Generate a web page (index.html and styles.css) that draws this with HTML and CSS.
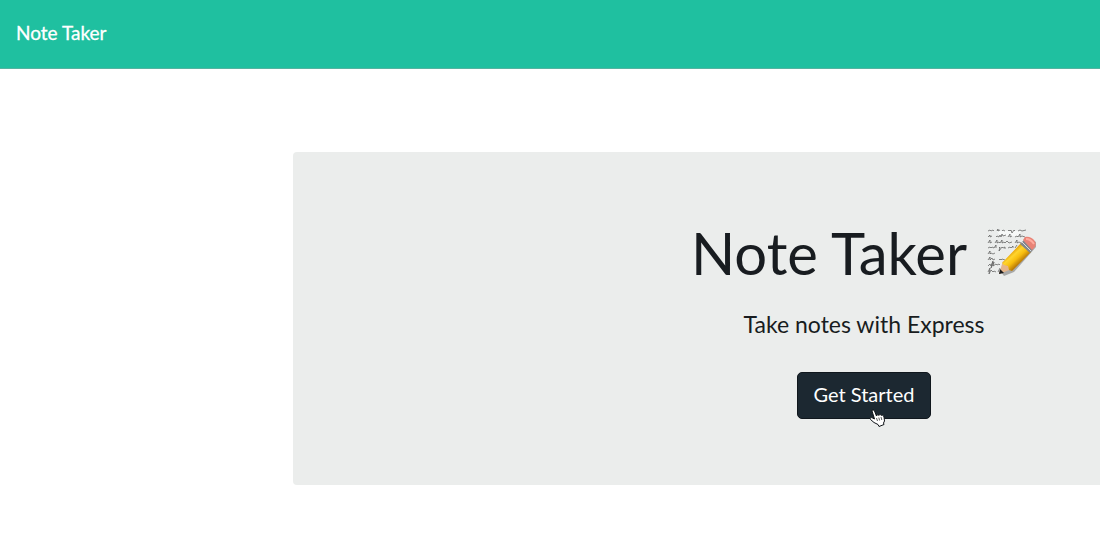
FILE: index.html
```html
<!DOCTYPE html>
<html lang="en">
<head>
<meta charset="utf-8">
<title>Note Taker</title>
<link rel="stylesheet" href="styles.css">
</head>
<body>
<nav class="navbar"><a class="brand" href="#">Note Taker</a></nav>
<main class="container">
  <section class="jumbotron">
    <h1 class="title">Note Taker
      <svg class="memo" viewBox="0 0 50 50" role="img" aria-label="memo">
        <defs>
          <linearGradient id="body" gradientUnits="userSpaceOnUse" x1="25" y1="24" x2="34" y2="34">
            <stop offset="0" stop-color="#e9a70c"/><stop offset="0.25" stop-color="#ffd52e"/><stop offset="0.6" stop-color="#f7bd0d"/><stop offset="1" stop-color="#b97a08"/>
          </linearGradient>
        </defs>
        <path d="M10 3h24l-3 5H13z" fill="#f7f9f8"/>
        <g class="script">
          <path d="M1 3l2-1 1 1 2-1 1 1M10 3l1-2v2l2-1M15 3l1-1 2 1M21 3l1-1 1 1 1-1 1 3 2-3 1 1M31 3l2-1 2 1 4-1"/>
          <path d="M1 9l2-2v2l2-1M9 9l1-1 2 1 1-2 1 2 1-3 1 2 3-1M21 9l2-3v3l2-1M28 9l2-1 1 1 2-3v3l2-1 3 1"/>
          <path d="M1 15l2-3v3l2-1M8 15l2-3v3l2-1 1 1 2-3v3l2-1 1 1 2-2 2 2 3-1M28 15l2-3v3l2-1 2 1"/>
          <path d="M1 20l2-1 1 1 1-1 2 1 2-3v3M12 20l1-1-1 4 3-4 1 1 2-1v2M21 20l2-1 1 1 2-2v2M28 20l2-3"/>
          <path d="M1 26l2-3v3l1-1 2 1 2-1"/>
          <path d="M1 32l2-3v3l2-2 1 2 2-1M12 32l1-1 1 1 1-1 3 1M20 31l2 1"/>
          <path d="M1 38l2-2 1 2 2-5-2 7 3-6-1 4 3-2 1 1 2-1 1 1"/>
          <path d="M1 44l2-4-1 6 2-4 2 2 1-1 2 1M11 44l2-4"/>
        </g>
        <path d="M17 48l10-4 22-25 0-5-5-3-30 33z" fill="#444" opacity=".4"/>
        <path d="M12 46l4-13 9 8z" fill="#e6b58a"/>
        <path d="M12 46l1-5 4 4z" fill="#1c1c1c"/>
        <path d="M15 35l19-20 10 9-19 19-3-1-1-4-4-1z" fill="url(#body)"/>
        <path d="M33 16l4-4 9 9-3 4z" fill="#83878b"/>
        <path d="M35 14l9 9" stroke="#d9dcde" stroke-width="1"/>
        <path d="M36 12l2-3c4-1 7 1 9 3 2 2 2 5 1 7l-3 3z" fill="#e98376"/>
        <path d="M39 11c4 0 6 2 8 5" fill="none" stroke="#ffaa9d" stroke-width="2"/>
      </svg>
    </h1>
    <p class="lead">Take notes with Express</p>
    <div class="action">
      <button class="btn" type="button">Get Started</button>
      <svg class="pointer" viewBox="0 0 16 18" aria-hidden="true">
        <path d="M3 2c0-1.500 2-1.500 2.500 0L7.500 7c0-1.500 2-1.500 2.500-.5 0-1.500 2-1 2.500 0 1-1 2 0 2.500 1.500l.5 4-1 2 .5 1.500-5 2-1-2-4-2-3.500-3c-1-1.500.5-2.500 2-1.500l2 1z" fill="#fff" stroke="#101418"/>
        <path d="M7.500 9l1 3M9.800 8.500l.8 3M12 8l.8 3" stroke="#333" stroke-width=".8" fill="none"/>
      </svg>
    </div>
  </section>
</main>
</body>
</html>
```
FILE: styles.css
```css
* { box-sizing: border-box; }
body {
  margin: 0;
  overflow-x: hidden;
  background: #fff;
  color: #181c20;
  font-family: Lato, sans-serif;
}
.navbar {
  display: flex;
  align-items: center;
  padding: 19px 16px 21px;
  background: #1fc0a0;
  border-bottom: 1px solid #55b3a0;
}
.brand {
  color: #fff;
  font-size: 19px;
  line-height: 28px;
  text-decoration: none;
  -webkit-text-stroke: 0.3px #fff;
}
.container {
  margin: 83px -335px 64px 293px;
}
.jumbotron {
  display: flex;
  flex-direction: column;
  align-items: center;
  padding: 65px 32px 66px;
  border-radius: 4px;
  background: #ebedec;
}
.title {
  display: flex;
  align-items: center;
  gap: 20px;
  margin: 0;
  font-size: 58px;
  line-height: 72px;
  font-weight: 400;
}
.memo {
  width: 50px;
  height: 50px;
}
.script {
  fill: none;
  stroke: #555;
  stroke-width: 0.7;
}
.lead {
  margin: 18px 0 31px;
  font-size: 23px;
  line-height: 34px;
}
.action { position: relative; }
.btn {
  display: block;
  padding: 8px 16px 10px;
  border: 1px solid #10171d;
  border-radius: 5px;
  background: #1c2831;
  color: #fff;
  font-family: inherit;
  font-size: 20px;
  line-height: 27px;
  cursor: pointer;
}
.pointer {
  position: absolute;
  left: 72px;
  top: 37px;
  width: 16px;
  height: 18px;
}
```
